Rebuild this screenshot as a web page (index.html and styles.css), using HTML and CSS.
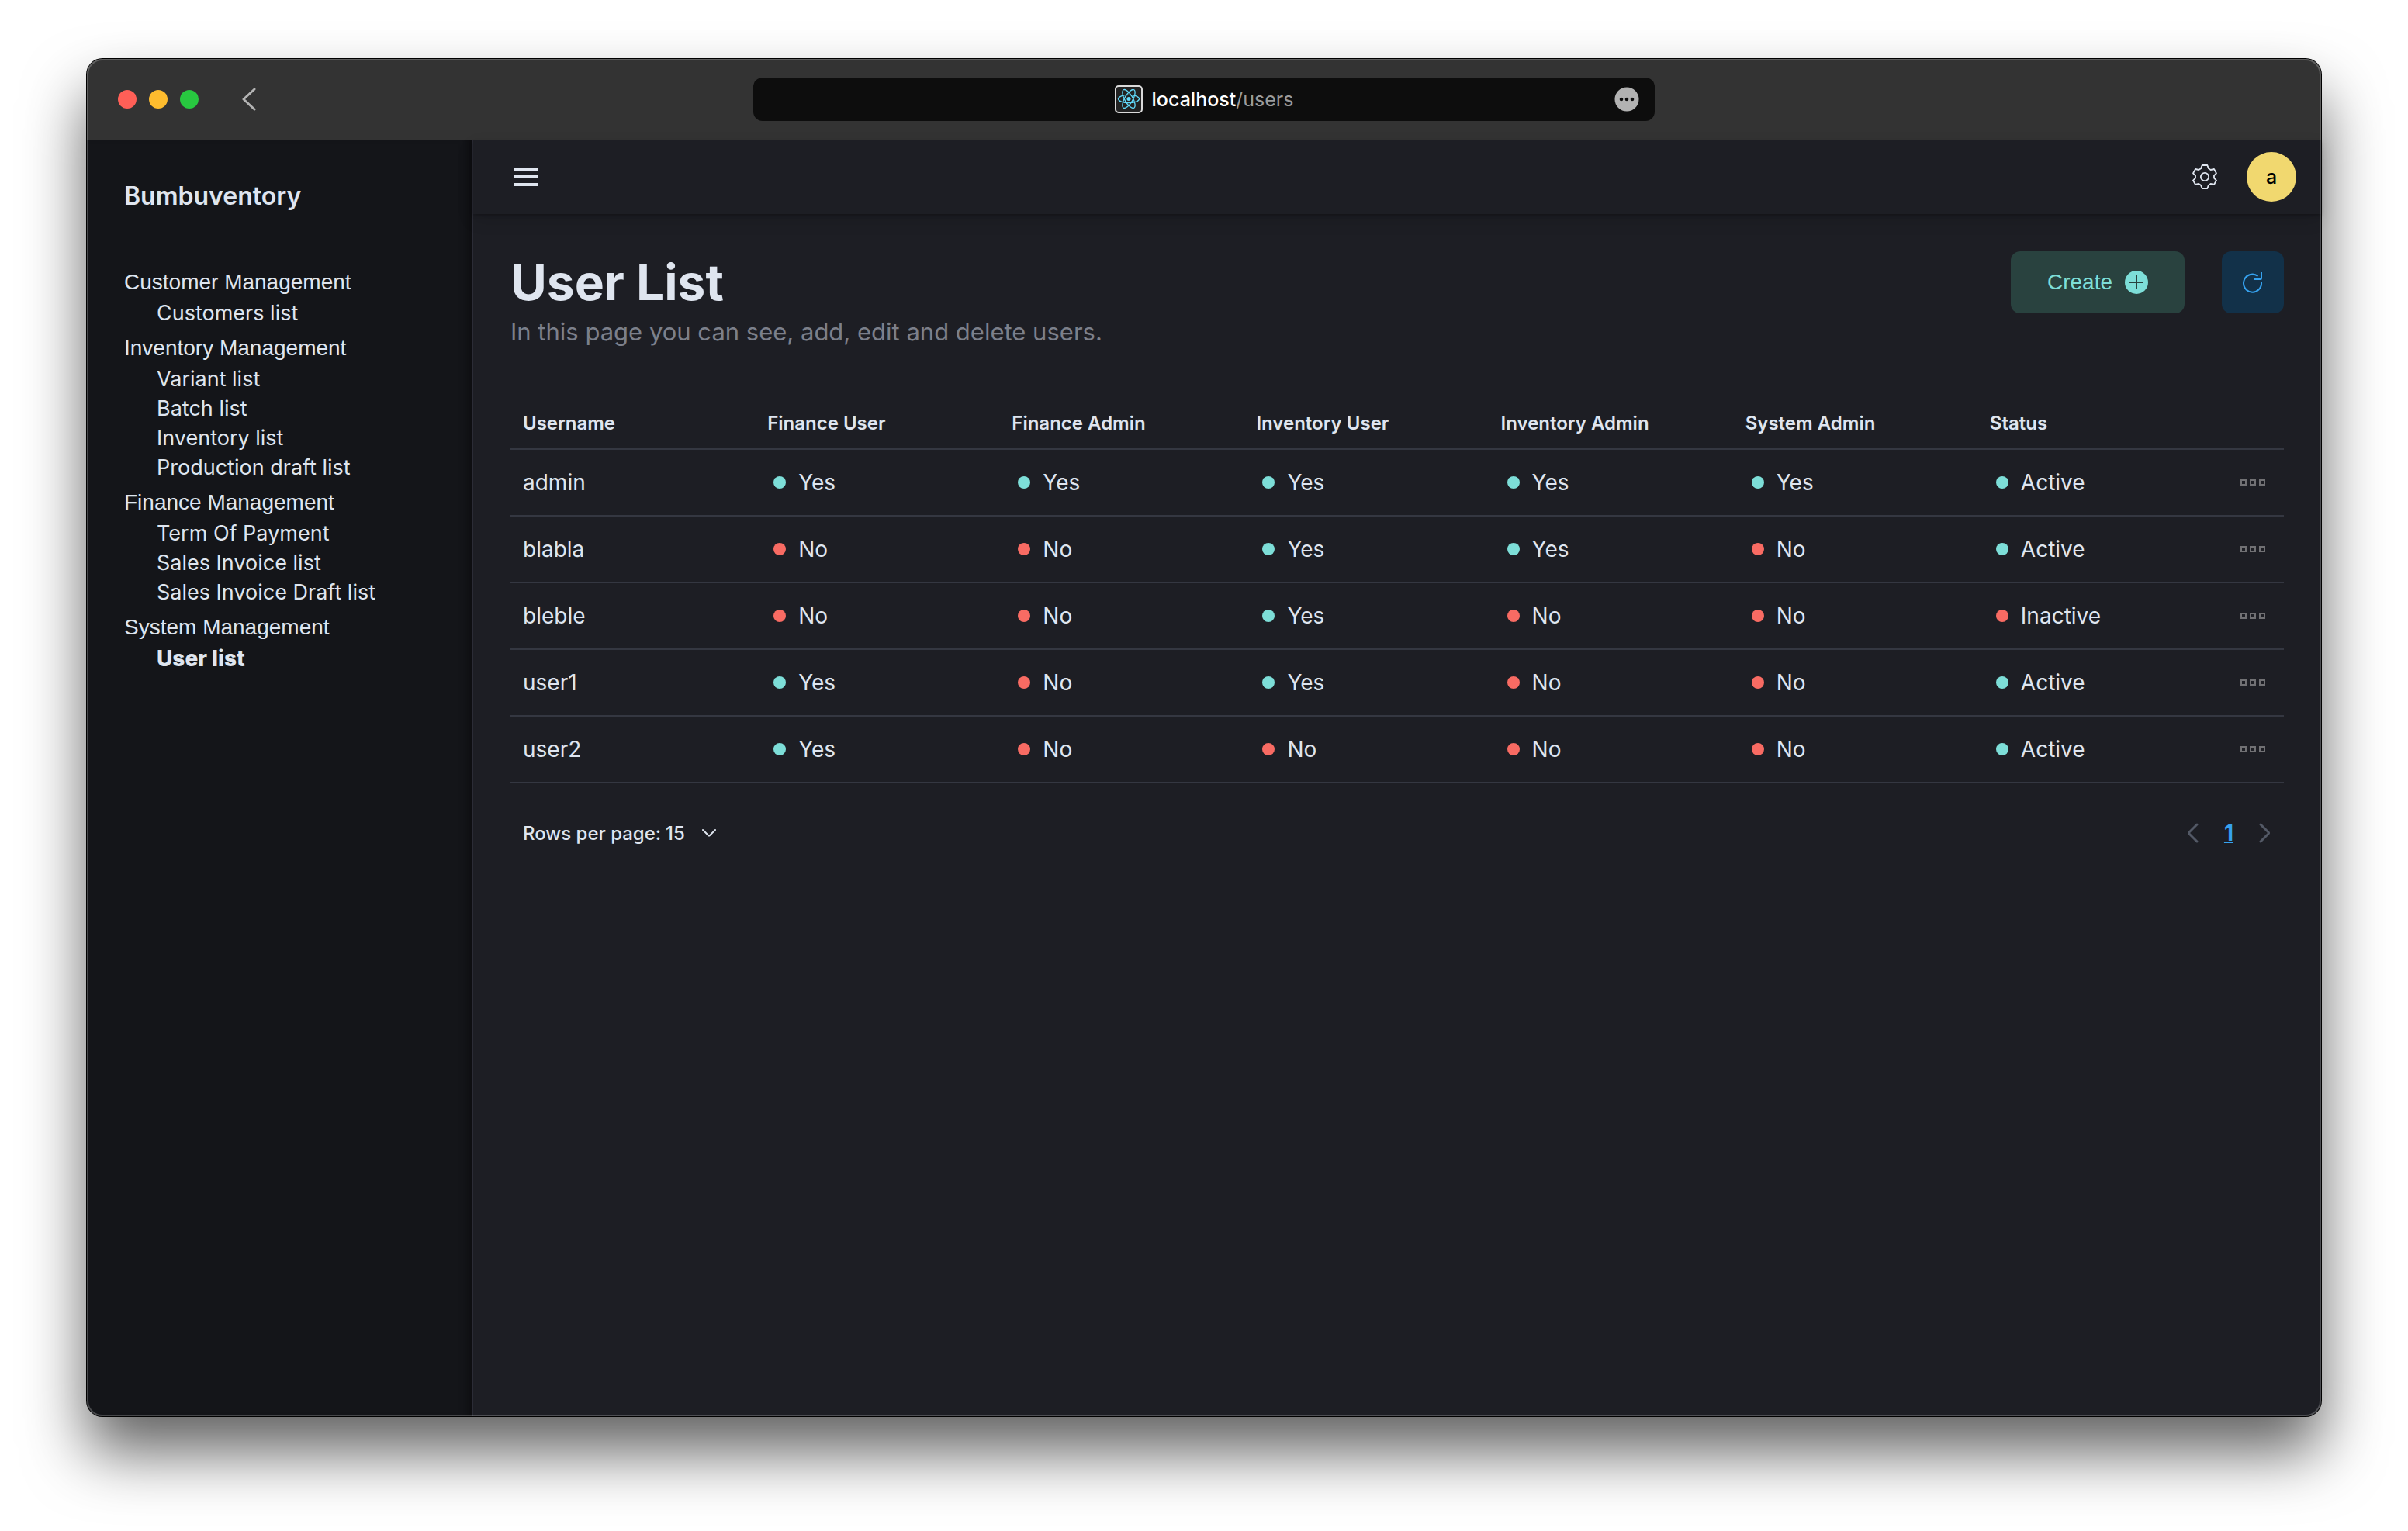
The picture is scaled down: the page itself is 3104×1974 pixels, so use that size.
FILE: index.html
```
<!DOCTYPE html>
<html lang="en">
<head>
<meta charset="utf-8">
<meta name="viewport" content="width=device-width, initial-scale=1">
<title>Bumbuventory</title>
<link rel="stylesheet" href="styles.css">
</head>
<body>
<svg class="sprite" aria-hidden="true">
  <symbol id="more" viewBox="0 0 32 8"><path d="M1 1h6v6H1zM13 1h6v6h-6zM25 1h6v6h-6z" fill="none" stroke="#717174" stroke-width="2"/></symbol>
</svg>
<div class="window">
  <header class="titlebar">
    <div class="titlebar-left">
      <button class="light light-close" aria-label="Close"></button>
      <button class="light light-min" aria-label="Minimize"></button>
      <button class="light light-max" aria-label="Zoom"></button>
      <button class="back" aria-label="Back">
        <svg width="18" height="30" viewBox="0 0 18 30"><path d="M16 2 2 15 16 28" fill="none" stroke="#b4b4b4" stroke-width="3" stroke-linecap="round" stroke-linejoin="round"/></svg>
      </button>
    </div>
    <div class="address">
      <div class="address-main">
        <svg class="favicon" width="36" height="36" viewBox="0 0 36 36">
          <rect x="1" y="1" width="34" height="34" rx="4" fill="#222" stroke="#dadada" stroke-width="2"/>
          <g fill="none" stroke="#61dafb" stroke-width="1.3">
            <ellipse cx="18" cy="17.500" rx="13.500" ry="5.200"/>
            <ellipse cx="18" cy="17.500" rx="13.500" ry="5.200" transform="rotate(60 18 17.500)"/>
            <ellipse cx="18" cy="17.500" rx="13.500" ry="5.200" transform="rotate(120 18 17.500)"/>
          </g>
          <circle cx="18" cy="17.500" r="2.500" fill="#61dafb"/>
        </svg>
        <span class="url"><span class="host">localhost</span>/users</span>
      </div>
      <button class="page-menu" aria-label="Page menu"><svg width="32" height="32" viewBox="0 0 32 32"><circle cx="16" cy="16" r="15.500" fill="#b2b2b2"/><g fill="#0d0d0d"><circle cx="9" cy="16" r="2.300"/><circle cx="16" cy="16" r="2.300"/><circle cx="23" cy="16" r="2.300"/></g></svg></button>
    </div>
  </header>

  <div class="app">
    <aside class="sidebar">
      <div class="brand">Bumbuventory</div>
      <nav class="nav">
        <section class="nav-group">
          <h2>Customer Management</h2>
          <ul><li><a href="#">Customers list</a></li></ul>
        </section>
        <section class="nav-group">
          <h2>Inventory Management</h2>
          <ul>
            <li><a href="#">Variant list</a></li>
            <li><a href="#">Batch list</a></li>
            <li><a href="#">Inventory list</a></li>
            <li><a href="#">Production draft list</a></li>
          </ul>
        </section>
        <section class="nav-group">
          <h2>Finance Management</h2>
          <ul>
            <li><a href="#">Term Of Payment</a></li>
            <li><a href="#">Sales Invoice list</a></li>
            <li><a href="#">Sales Invoice Draft list</a></li>
          </ul>
        </section>
        <section class="nav-group">
          <h2>System Management</h2>
          <ul><li><a class="current" href="#" aria-current="page">User list</a></li></ul>
        </section>
      </nav>
    </aside>

    <div class="content">
      <div class="topbar">
        <button class="menu-toggle" aria-label="Toggle menu"><svg width="32" height="24" viewBox="0 0 32 24"><path d="M0 0h32v4H0zM0 10h32v4H0zM0 20h32v4H0z" fill="#dfe5ef"/></svg></button>
        <div class="topbar-right">
          <button class="settings" aria-label="Settings">
            <svg width="32" height="32" viewBox="0 0 96 96" fill="none" stroke="#dfe5ef" stroke-width="5.500" stroke-linejoin="round"><path d="M38 3H58L63 16 71 21 84 18 93 34 84 43V53L93 62 84 78 71 75 63 80 58 93H38L33 80 25 75 12 78 3 62 12 53V43L3 34 12 18 25 21 33 16Z"/><circle cx="48" cy="48" r="15.500"/></svg>
          </button>
          <button class="avatar" aria-label="Account">a</button>
        </div>
      </div>

      <main class="main">
        <div class="page-head">
          <div>
            <h1>User List</h1>
            <p class="subtitle">In this page you can see, add, edit and delete users.</p>
          </div>
          <div class="actions">
            <button class="create">Create
              <svg width="30" height="30" viewBox="0 0 30 30"><circle cx="15" cy="15" r="15" fill="#7dded8"/><path d="M15 6v18M6 15h18" stroke="#29423f" stroke-width="2"/></svg>
            </button>
            <button class="refresh" aria-label="Refresh">
              <svg width="26" height="28" viewBox="0 0 26 28" fill="none" stroke="#36a2ef" stroke-width="2" stroke-linejoin="round"><path d="M24 1V8.500Q24 10 22.500 10H15"/><path d="M19.500 6A11.500 11.500 0 1 0 24 14"/></svg>
            </button>
          </div>
        </div>

        <table class="users">
          <thead>
            <tr><th scope="col">Username</th><th scope="col">Finance User</th><th scope="col">Finance Admin</th><th scope="col">Inventory User</th><th scope="col">Inventory Admin</th><th scope="col">System Admin</th><th scope="col">Status</th><td class="tools"></td></tr>
          </thead>
          <tbody>
            <tr><td>admin</td><td><span class="flag on">Yes</span></td><td><span class="flag on">Yes</span></td><td><span class="flag on">Yes</span></td><td><span class="flag on">Yes</span></td><td><span class="flag on">Yes</span></td><td><span class="flag on">Active</span></td><td class="tools"><button aria-label="Actions for admin"><svg width="32" height="8"><use href="#more"/></svg></button></td></tr>
            <tr><td>blabla</td><td><span class="flag off">No</span></td><td><span class="flag off">No</span></td><td><span class="flag on">Yes</span></td><td><span class="flag on">Yes</span></td><td><span class="flag off">No</span></td><td><span class="flag on">Active</span></td><td class="tools"><button aria-label="Actions for blabla"><svg width="32" height="8"><use href="#more"/></svg></button></td></tr>
            <tr><td>bleble</td><td><span class="flag off">No</span></td><td><span class="flag off">No</span></td><td><span class="flag on">Yes</span></td><td><span class="flag off">No</span></td><td><span class="flag off">No</span></td><td><span class="flag off">Inactive</span></td><td class="tools"><button aria-label="Actions for bleble"><svg width="32" height="8"><use href="#more"/></svg></button></td></tr>
            <tr><td>user1</td><td><span class="flag on">Yes</span></td><td><span class="flag off">No</span></td><td><span class="flag on">Yes</span></td><td><span class="flag off">No</span></td><td><span class="flag off">No</span></td><td><span class="flag on">Active</span></td><td class="tools"><button aria-label="Actions for user1"><svg width="32" height="8"><use href="#more"/></svg></button></td></tr>
            <tr><td>user2</td><td><span class="flag on">Yes</span></td><td><span class="flag off">No</span></td><td><span class="flag off">No</span></td><td><span class="flag off">No</span></td><td><span class="flag off">No</span></td><td><span class="flag on">Active</span></td><td class="tools"><button aria-label="Actions for user2"><svg width="32" height="8"><use href="#more"/></svg></button></td></tr>
          </tbody>
        </table>

        <div class="table-foot">
          <div class="page-size">
            <label for="rows">Rows per page:</label>
            <span class="select-wrap">
              <select id="rows"><option>15</option></select>
              <svg width="20" height="12" viewBox="0 0 20 12"><path d="M2 2 9 9Q10 10 11 9L18 2" fill="none" stroke="#dfe5ef" stroke-width="2" stroke-linecap="round"/></svg>
            </span>
          </div>
          <nav class="pager" aria-label="Pagination">
            <button aria-label="Previous page"><svg width="14" height="26" viewBox="0 0 14 26"><path d="M12 2 2 12Q1 13 2 14L12 24" fill="none" stroke="#535966" stroke-width="3" stroke-linecap="round"/></svg></button>
            <a href="#" aria-current="page">1</a>
            <button aria-label="Next page"><svg width="14" height="26" viewBox="0 0 14 26"><path d="M2 2 12 12Q13 13 12 14L2 24" fill="none" stroke="#535966" stroke-width="3" stroke-linecap="round"/></svg></button>
          </nav>
        </div>
      </main>
    </div>
  </div>
</div>
</body>
</html>
```
FILE: styles.css
```
* { box-sizing: border-box; }

body {
  margin: 0;
  min-height: 100vh;
  padding: 76px 112px 148px;
  display: flex;
  background: #fff;
  color: #dfe5ef;
  font-family: Inter, "Liberation Sans", sans-serif;
  font-size: 28px;
}

button, select {
  margin: 0;
  padding: 0;
  border: 0;
  background: none;
  color: inherit;
  font: inherit;
}

a { color: inherit; text-decoration: none; }
svg { display: block; flex: none; }
h1, h2, p, ul { margin: 0; padding: 0; }
ul { list-style: none; }
.sprite { position: absolute; width: 0; height: 0; }

/* Browser window */
.window {
  position: relative;
  flex: 1;
  min-width: 0;
  display: flex;
  flex-direction: column;
  border-radius: 20px;
  box-shadow: 0 0 0 1px #000, 0 46px 80px rgba(0, 0, 0, 0.62);
  background: #1d1e24;
}

.window::after {
  content: "";
  position: absolute;
  inset: 0;
  border: 2px solid rgba(255, 255, 255, 0.22);
  border-radius: 20px;
  pointer-events: none;
}

.titlebar {
  display: grid;
  grid-template-columns: 1fr minmax(0, 1162px) 1fr;
  align-items: center;
  height: 105px;
  border-bottom: 1px solid #000;
  border-radius: 20px 20px 0 0;
  background: #333;
}

.titlebar-left {
  display: flex;
  align-items: center;
  gap: 16px;
  padding-left: 40px;
}

.light { width: 24px; height: 24px; border-radius: 50%; }
.light-close { background: #ff5f57; }
.light-min { background: #febc2e; }
.light-max { background: #28c840; }
.back { margin-left: 40px; }

.address {
  display: grid;
  grid-template-columns: 52px 1fr 52px;
  align-items: center;
  height: 56px;
  border-radius: 12px;
  background: #0d0d0d;
}

.address-main {
  grid-column: 2;
  display: flex;
  justify-content: center;
  align-items: center;
  gap: 12px;
}

.url { color: #9b9b9b; font-size: 25px; }
.host { color: #fff; font-weight: 500; }

/* App shell */
.app { flex: 1; display: flex; }

.sidebar {
  flex: none;
  width: 498px;
  padding: 52px 48px;
  border-right: 2px solid #2b2c36;
  border-radius: 0 0 0 20px;
  background: #141519;
  box-shadow: inset -12px 0 12px -8px rgba(0, 0, 0, 0.4);
}

.brand {
  margin-bottom: 74px;
  font-size: 32px;
  font-weight: 600;
  line-height: 40px;
}

.nav { display: flex; flex-direction: column; gap: 9px; }

.nav h2 {
  margin-bottom: 4px;
  font: 400 28px/34px "Liberation Sans", sans-serif;
}

.nav ul { padding-left: 42px; font-size: 27px; line-height: 38px; }
.nav a { display: block; white-space: nowrap; }
.nav .current { font-size: 28px; font-weight: 800; }

.content { flex: 1; min-width: 0; }

.topbar {
  display: flex;
  justify-content: space-between;
  align-items: center;
  height: 95px;
  padding: 0 32px 2px 48px;
  box-shadow: 0 2px 4px rgba(0, 0, 0, 0.25), 0 8px 20px rgba(0, 0, 0, 0.12);
}

.menu-toggle { padding: 8px 4px; }
.topbar-right { display: flex; align-items: center; gap: 38px; }

.avatar {
  width: 64px;
  height: 64px;
  border-radius: 50%;
  background: #f1d86f;
  color: #000;
  font-size: 25px;
  font-weight: 500;
}

.main { padding: 48px; }

.page-head {
  display: flex;
  justify-content: space-between;
  align-items: flex-start;
  margin-bottom: 60px;
}

h1 { font-size: 64px; font-weight: 700; line-height: 80px; }
.subtitle { color: #7c808b; font-size: 31px; line-height: 48px; }

.actions { display: flex; gap: 48px; }

.actions button {
  display: flex;
  justify-content: center;
  align-items: center;
  gap: 16px;
  height: 80px;
  border-radius: 12px;
}

.create {
  width: 224px;
  background: #29423f;
  color: #7dded8;
  font-family: "Liberation Sans", sans-serif;
}

.refresh { width: 80px; background: #123149; }

/* User table */
.users {
  width: 100%;
  table-layout: fixed;
  border-collapse: separate;
  border-spacing: 0;
}

.users th, .users td {
  height: 86px;
  padding: 0 16px;
  border-bottom: 2px solid #343741;
  text-align: left;
}

.users thead th, .users thead td {
  height: 68px;
  font-size: 24px;
  font-weight: 600;
}

.users .tools { width: 80px; padding: 0 24px; }
.users .tools button { display: block; padding: 16px 0; }

.flag { display: flex; align-items: center; gap: 16px; padding-left: 8px; }
.flag::before { content: ""; width: 16px; height: 16px; border-radius: 50%; }
.on::before { background: #7dded8; }
.off::before { background: #f86b63; }

.table-foot {
  display: flex;
  justify-content: space-between;
  align-items: center;
  height: 64px;
  margin-top: 32px;
  padding: 0 16px;
}

.page-size {
  display: flex;
  align-items: center;
  gap: 6px;
  font-size: 24px;
  font-weight: 500;
}

.select-wrap { display: grid; align-items: center; }
.select-wrap > * { grid-area: 1 / 1; }
.select-wrap select { width: 66px; appearance: none; }
.select-wrap option { background: #1d1e24; }
.select-wrap svg { justify-self: end; pointer-events: none; }

.pager { display: flex; align-items: center; gap: 33px; padding-right: 2px; }

.pager a {
  color: #36a2ef;
  font-weight: 700;
  text-decoration: underline;
  text-decoration-thickness: 2px;
}
```
